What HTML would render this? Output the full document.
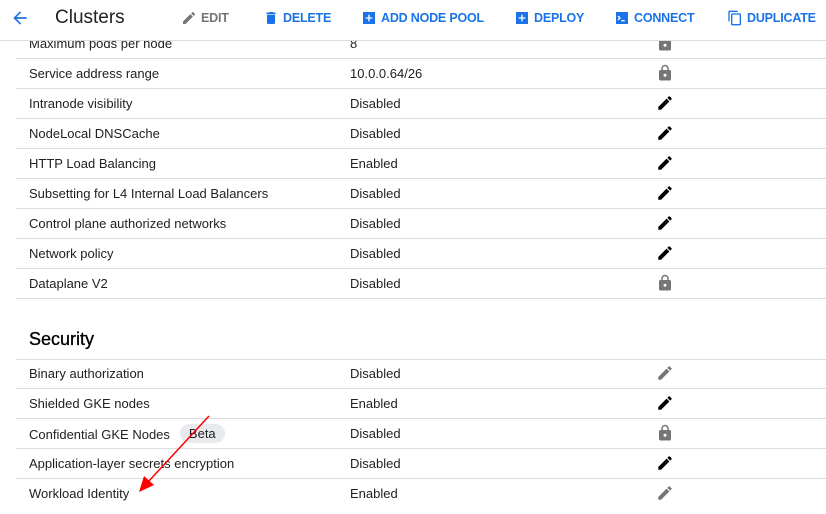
<!DOCTYPE html>
<html><head><style>
*{margin:0;padding:0;box-sizing:border-box}
body{width:826px;height:514px;overflow:hidden;background:#fff;font-family:"Liberation Sans",sans-serif;position:relative;color:#202124}
.hdr{position:absolute;left:0;top:0;width:826px;height:41px;background:#fff;z-index:2;border-bottom:1px solid #dadce0}
.hdr .t{position:absolute;left:55px;top:7px;font-size:19px;color:#202124}
.btn{position:absolute;top:10px;font-size:12.5px;font-weight:bold;color:#1a73e8;display:flex;align-items:center;gap:4px;letter-spacing:-0.2px}
.row{position:absolute;left:16px;width:810px;height:30px;border-bottom:1px solid #dadce0;font-size:13px}
.row .a{position:absolute;left:13px;top:7px;display:flex;align-items:center}
.row .b{position:absolute;left:334px;top:7px}
.row svg{position:absolute;left:640px;top:5px}
.beta{display:inline-block;background:#e8eaed;border-radius:10px;padding:2px 9px;margin-left:10px;font-size:13px;margin-top:-2px}
</style></head><body>
<div class="hdr">
<svg style="position:absolute;left:10px;top:8px" width="20" height="20" viewBox="0 0 24 24"><path d="M20 11H7.8l5.6-5.6L12 4l-8 8 8 8 1.4-1.4L7.8 13H20z" fill="#1a73e8"/></svg>
<div class="t">Clusters</div>
<div class="btn" style="left:181px;color:#757575"><svg width="16" height="16" viewBox="0 0 24 24"><path d="M3 17.25V21h3.75L17.8 9.94l-3.75-3.75zM20.7 7.04a1 1 0 000-1.41l-2.34-2.34a1 1 0 00-1.41 0l-1.83 1.83 3.75 3.75z" fill="#757575"/></svg>EDIT</div>
<div class="btn" style="left:263px"><svg width="16" height="16" viewBox="0 0 24 24"><path d="M6 19a2 2 0 002 2h8a2 2 0 002-2V7H6zM19 4h-3.5l-1-1h-5l-1 1H5v2h14z" fill="#1a73e8"/></svg>DELETE</div>
<div class="btn" style="left:361px"><svg width="16" height="16" viewBox="0 0 24 24"><path d="M3 3h18v18H3z" fill="#1a73e8"/><path d="M11 7h2v4h4v2h-4v4h-2v-4H7v-2h4z" fill="#fff"/></svg>ADD NODE POOL</div>
<div class="btn" style="left:514px"><svg width="16" height="16" viewBox="0 0 24 24"><path d="M3 3h18v18H3z" fill="#1a73e8"/><path d="M11 7h2v4h4v2h-4v4h-2v-4H7v-2h4z" fill="#fff"/></svg>DEPLOY</div>
<div class="btn" style="left:614px"><svg width="16" height="16" viewBox="0 0 24 24"><path d="M3 3h18v18H3z" fill="#1a73e8"/><path d="M6 9l3 3-3 3M11 16h5" stroke="#fff" stroke-width="2" fill="none"/></svg>CONNECT</div>
<div class="btn" style="left:727px"><svg width="16" height="16" viewBox="0 0 24 24"><path d="M16 1H4a2 2 0 00-2 2v14h2V3h12zm3 4H8a2 2 0 00-2 2v14a2 2 0 002 2h11a2 2 0 002-2V7a2 2 0 00-2-2zm0 16H8V7h11z" fill="#1a73e8"/></svg>DUPLICATE</div>
</div>
<div id="rows"></div>
<div style="position:absolute;left:29px;top:329px;font-size:18px;color:#000;-webkit-text-stroke:0.3px #000">Security</div>
<div style="position:absolute;left:16px;top:359px;width:810px;border-top:1px solid #dadce0"></div>
<svg style="position:absolute;left:0;top:0" width="826" height="514"><line x1="209" y1="416" x2="148" y2="482" stroke="#f00" stroke-width="1.5"/><path d="M139 492l5-16 10 9z" fill="#f00"/></svg>
<script>
var L='<svg width="18" height="18" viewBox="0 0 24 24"><path d="M18 8h-1V6A5 5 0 007 6v2H6a2 2 0 00-2 2v10a2 2 0 002 2h12a2 2 0 002-2V10a2 2 0 00-2-2zm-6 9a2 2 0 110-4 2 2 0 010 4zM9 8V6a3 3 0 016 0v2z" fill="#757575"/></svg>';
function P(c){return '<svg width="18" height="18" viewBox="0 0 24 24"><path d="M3 17.25V21h3.75L17.8 9.94l-3.75-3.75zM20.7 7.04a1 1 0 000-1.41l-2.34-2.34a1 1 0 00-1.41 0l-1.83 1.83 3.75 3.75z" fill="'+c+'"/></svg>';}
var D=P('#000'),G=P('#757575');
var r=[[29,"Maximum pods per node","8",L],[59,"Service address range","10.0.0.64/26",L],[89,"Intranode visibility","Disabled",D],[119,"NodeLocal DNSCache","Disabled",D],[149,"HTTP Load Balancing","Enabled",D],[179,"Subsetting for L4 Internal Load Balancers","Disabled",D],[209,"Control plane authorized networks","Disabled",D],[239,"Network policy","Disabled",D],[269,"Dataplane V2","Disabled",L],
[359,"Binary authorization","Disabled",G],[389,"Shielded GKE nodes","Enabled",D],[419,"Confidential GKE Nodes<span class=beta>Beta</span>","Disabled",L],[449,"Application-layer secrets encryption","Disabled",D],[479,"Workload Identity","Enabled",G]];
var h='';r.forEach(function(x,i){h+='<div class="row" style="top:'+x[0]+'px'+(i==r.length-1?';border-bottom:none':'')+'"><span class="a">'+x[1]+'</span><span class="b">'+x[2]+'</span>'+x[3]+'</div>';});
document.getElementById('rows').innerHTML=h;
</script>
</body></html>
